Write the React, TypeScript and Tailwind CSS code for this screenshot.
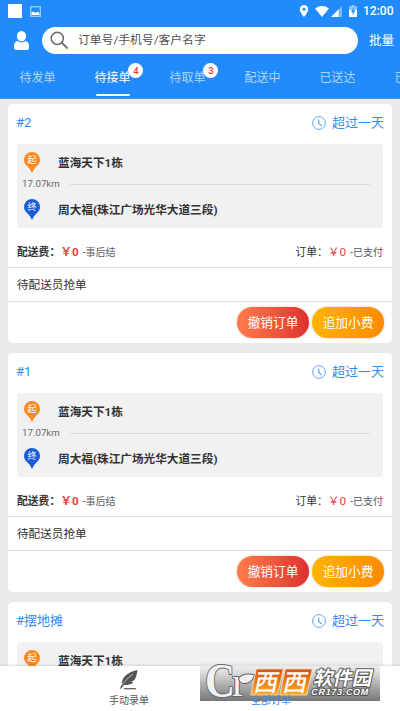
import type { ReactNode } from "react";

interface Order {
  id: string;
  from: string;
  to: string;
  distance: string;
}

const tabs = [
  { label: "待发单" },
  { label: "待接单", badge: 4, active: true },
  { label: "待取单", badge: 3 },
  { label: "配送中" },
  { label: "已送达" },
  { label: "已取消" },
];

const orders: Order[] = [
  { id: "#2", from: "蓝海天下1栋", to: "周大福(珠江广场光华大道三段)", distance: "17.07km" },
  { id: "#1", from: "蓝海天下1栋", to: "周大福(珠江广场光华大道三段)", distance: "17.07km" },
  { id: "#摆地摊", from: "蓝海天下1栋", to: "周大福(珠江广场光华大道三段)", distance: "17.07km" },
];

const StatusBar = () => (
  <div className="flex h-[22px] items-center pl-2 pr-[7px]">
    <div className="h-[14px] w-[14px] bg-white" />
    <svg className="ml-2 h-[11px] w-[11px]" viewBox="0 0 11 11">
      <rect x="0.7" y="0.7" width="9.6" height="9.6" fill="none" stroke="#a5cfff" strokeWidth="1.2" />
      <path d="M1.5 9V6.5l2-1 2 1.5 2-1.5 2 2V9z" fill="#fff" />
    </svg>
    <div className="flex-1" />
    <svg className="h-[12px] w-[10px]" viewBox="0 0 10 12">
      <path d="M5 0a4.2 4.2 0 0 0-4.2 4.2C.8 7.3 5 12 5 12s4.2-4.7 4.2-7.8A4.2 4.2 0 0 0 5 0z" fill="#fff" />
      <circle cx="5" cy="4.2" r="1.5" fill="#228bfb" />
    </svg>
    <svg className="ml-[6px] h-[11px] w-[14px]" viewBox="0 0 14 11">
      <path d="M0 2.4Q7-2.4 14 2.4L7 11z" fill="#fff" />
    </svg>
    <svg className="ml-[2px] h-[11px] w-[11px]" viewBox="0 0 11 11">
      <path d="M11 0v11H0z" fill="#7bb9fd" />
      <path d="M7.5 3.5V11H0z" fill="#fff" />
    </svg>
    <svg className="ml-[7px] h-[12px] w-[8px]" viewBox="0 0 8 12">
      <path d="M2.5 0h3v1.2H8V5H0V1.2h2.5z" fill="#90c5fd" />
      <path d="M0 5h8v7H0z" fill="#fff" />
      <path d="M5 2L2 7h1.7v3.4L6.3 5.6H4.5z" fill="#228bfb" />
    </svg>
    <span className="ml-[6px] w-[30px] whitespace-nowrap font-[Roboto] text-[12px] font-medium leading-none">12:00</span>
  </div>
);

const Header = () => (
  <header className="h-[99px] shrink-0 overflow-hidden border-b border-[#4c8fdc] bg-[#228bfb] text-white">
    <StatusBar />
    <div className="flex h-9 items-center pl-[14px] pr-[6px]">
      <svg className="h-[19px] w-[15px]" viewBox="0 0 15 19">
        <ellipse cx="7.5" cy="5.3" rx="4.6" ry="5.3" fill="#fff" />
        <path d="M3.3 9.7Q7.5 13 11.7 9.7Q15 11.2 15 15v1.5Q15 19 12.5 19h-10Q0 19 0 16.5V15Q0 11.2 3.3 9.7z" fill="#fff" />
        <path d="M3 9.3Q7.5 12.6 12 9.3" fill="none" stroke="#228bfb" strokeWidth="0.6" />
      </svg>
      <div className="ml-[13px] flex h-[27px] flex-1 items-center rounded-full bg-white">
        <svg className="ml-[8px] h-[19px] w-[19px]" viewBox="0 0 19 19" fill="none" stroke="#696969" strokeWidth="1.5">
          <circle cx="7.3" cy="7.3" r="6.1" />
          <path d="M11.7 11.7l5.8 5.8" strokeWidth="1.8" />
        </svg>
        <span className="ml-[9px] pt-[2px] text-[11.8px] leading-none text-[#505050]">订单号/手机号/客户名字</span>
      </div>
      <span className="ml-[11px] w-[25px] whitespace-nowrap pt-[2px] text-[12.5px] leading-none">批量</span>
    </div>
    <nav className="flex w-[450px]">
      {tabs.map((tab) => (
        <div
          key={tab.label}
          className={`flex h-[39px] w-[75px] shrink-0 flex-col items-center ${tab.active ? "text-white" : "text-[#add5ff]"}`}
        >
          <div className="relative mt-[13px] text-[12px] leading-[14px]">
            {tab.label}
            {tab.badge && (
              <span className="absolute -top-[8px] left-[34px] flex h-[15px] w-[15px] items-center justify-center rounded-full bg-white text-[9.5px] font-medium text-[#e83a35]">
                {tab.badge}
              </span>
            )}
          </div>
          {tab.active && <div className="mt-[9px] h-[2px] w-[34px] rounded-full bg-white" />}
        </div>
      ))}
    </nav>
  </header>
);

const Pin = ({ label, color }: { label: string; color: string }) => (
  <svg className="h-[21px] w-4 shrink-0" viewBox="0 0 16 21">
    <path d="M8 0a8 8 0 0 0-8 8c0 2.7 1.5 4.7 3.3 6.3Q6.5 17 8 21q1.5-4 4.7-6.7C14.5 12.7 16 10.7 16 8a8 8 0 0 0-8-8z" fill={color} />
    <text x="8" y="11.3" textAnchor="middle" fontSize="9" fontWeight="400" fill="#fff">{label}</text>
  </svg>
);

const ActionButton = ({ className, children }: { className: string; children: ReactNode }) => (
  <button className={`h-[31px] w-[72px] rounded-full bg-gradient-to-r pt-px text-[12.7px] leading-none text-white shadow-[0_0_2px_rgba(180,90,30,0.5)] ${className}`}>
    {children}
  </button>
);

const OrderCard = ({ order }: { order: Order }) => (
  <article className="h-[239px] shrink-0 rounded-[5px] bg-white text-[#333]">
    <div className="flex h-10 items-center justify-between px-[8px] pb-[2px] text-[13px] text-[#348bea]">
      <span>{order.id}</span>
      <span className="flex items-center">
        <svg className="mr-[6px] h-[14px] w-[14px]" viewBox="0 0 14 14" fill="none" stroke="#64a7f0">
          <circle cx="7" cy="7" r="6.4" />
          <path d="M6.7 3.5v4l3 2.5" strokeWidth="1.2" />
        </svg>
        超过一天
      </span>
    </div>
    <div className="mx-[9px] h-[84px] rounded-[4px] bg-[#f1f1f1] pt-[7px] text-[11.65px] font-bold">
      <div className="flex h-[22px] items-center pl-[7px]">
        <Pin label="起" color="#fb8b1f" />
        <span className="ml-[18px] pt-[3px]">{order.from}</span>
      </div>
      <div className="flex h-[25px] items-center pb-[2px] pl-[5px] pr-[13px]">
        <span className="w-[48px] font-[Roboto] text-[9.7px] font-normal text-[#6c6c6c]">{order.distance}</span>
        <div className="h-px flex-1 bg-[#dadada]" />
      </div>
      <div className="flex h-[22px] items-center pl-[7px]">
        <Pin label="终" color="#1c5cd9" />
        <span className="ml-[18px] pt-[3px]">{order.to}</span>
      </div>
    </div>
    <div className="flex h-10 items-center justify-between border-b border-[#dedede] px-[9px] pt-[10px] text-[10.8px]">
      <span className="font-bold">
        配送费：<span className="text-[11.8px] text-[#ed4141]">￥0</span>
        <span className="ml-1 text-[10px] font-normal text-[#606060]">-事后结</span>
      </span>
      <span>
        订单：<span className="text-[11.8px] text-[#ed4141]">￥0</span>
        <span className="ml-1 text-[10px] text-[#555]">-已支付</span>
      </span>
    </div>
    <div className="flex h-[34px] items-center border-b border-[#dedede] px-[9px] pt-[2px] text-[11.6px]">待配送员抢单</div>
    <div className="flex justify-end gap-[3px] pr-[8px] pt-[5px]">
      <ActionButton className="from-[#ff7b4b] to-[#dc3031]">撤销订单</ActionButton>
      <ActionButton className="from-[#ffb400] to-[#fe8900]">追加小费</ActionButton>
    </div>
  </article>
);

const Watermark = () => (
  <svg className="absolute left-[200px] top-[661px] h-[40px] w-[180px]" viewBox="0 0 180 40">
    <defs>
      <linearGradient id="shade" x2="0" y2="1">
        <stop stopColor="#eee" stopOpacity="0.5" />
        <stop offset="0.5" stopColor="#bcbcbc" />
        <stop offset="1" stopColor="#777" />
      </linearGradient>
      <linearGradient id="orange" x2="0" y2="1">
        <stop stopColor="#d9500f" />
        <stop offset="1" stopColor="#ffae25" />
      </linearGradient>
    </defs>
    <rect width="180" height="40" fill="url(#shade)" />
    <g fill="#f2f2f2" stroke="#666" strokeWidth="2" paintOrder="stroke" strokeLinejoin="round" fontFamily="Liberation Serif, serif">
      <text x="5" y="36" fontSize="49" fontWeight="bold" textLength="30" lengthAdjust="spacingAndGlyphs">C</text>
      <text x="32" y="35" fontSize="42">r</text>
      <path d="M39 18q3-6 15-4-3 9-11 8-3-1-4-4z" />
    </g>
    <g transform="skewX(-12)" fontFamily="Noto Sans CJK SC, sans-serif">
      <path d="M58 8h27v26H58zM87 8h27v26H87z" fill="url(#orange)" stroke="#f5dcc5" strokeWidth="0.8" />
      <g fill="#fff" fontSize="24" fontWeight="500">
        <text x="59.5" y="30">西</text>
        <text x="88.5" y="30">西</text>
      </g>
      <g fill="#fff" stroke="#555" strokeWidth="2" paintOrder="stroke" strokeLinejoin="round" fontWeight="bold">
        <text x="118" y="24" fontSize="19.5">软件园</text>
        <text x="118" y="34" fontSize="9" fontFamily="Liberation Sans, sans-serif" textLength="57">CR173.COM</text>
      </g>
    </g>
  </svg>
);

const BottomNav = () => (
  <nav className="flex h-[45px] shrink-0 bg-white px-[58px] text-[10px] leading-none shadow-[0_-1px_2px_rgba(0,0,0,0.12)]">
    <div className="flex flex-1 flex-col items-center pt-[4px] text-[#555]">
      <svg className="h-[20px] w-[18px]" viewBox="0 0 18 20">
        <path d="M17.5 0C12 1 5 4 2.5 10q-1 3-.5 4L0 18.5l1 .3L4 15c7 0 9-2 9-3h-2l3.5-2c2-3 2.5-7 3-10z" fill="#555" />
        <path d="M2 15Q6 9 13 4" fill="none" stroke="#fff" strokeWidth="0.6" />
        <path d="M4 18.7h12" stroke="#555" strokeWidth="1.2" />
      </svg>
      <span className="mt-[6px]">手动录单</span>
    </div>
    <div className="flex flex-1 flex-col items-center pt-[30px] text-[#348bea]">
      <span className="relative z-10">全部订单</span>
    </div>
  </nav>
);

const App = () => (
  <div className="relative flex h-[711px] w-[400px] flex-col overflow-hidden bg-[#eaeaea] font-['Roboto','Noto_Sans_CJK_SC',sans-serif]">
    <Header />
    <main className="flex min-h-0 flex-1 flex-col gap-[10px] overflow-hidden px-2 pt-[5px]">
      {orders.map((order) => (
        <OrderCard key={order.id} order={order} />
      ))}
    </main>
    <BottomNav />
    <Watermark />
  </div>
);

export default App;
